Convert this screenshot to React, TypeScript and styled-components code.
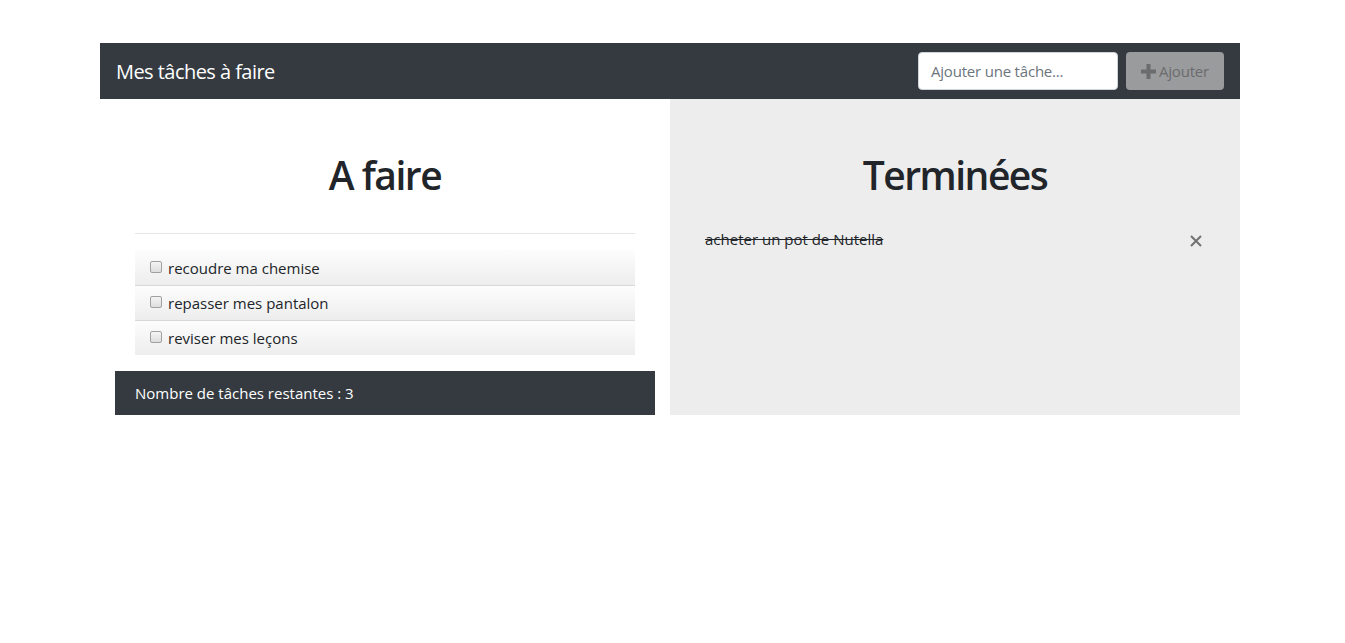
import React from "react";
import styled, { createGlobalStyle } from "styled-components";

const Global = createGlobalStyle`
  html, body { margin: 0; padding: 0; background: #fff; }
  body {
    font-family: "Open Sans", "Noto Sans", "Liberation Sans", sans-serif;
    color: #212529;
    font-size: 16px;
  }
  * { box-sizing: border-box; }
`;

const Page = styled.div`
  width: 1140px;
  margin: 43px 0 0 100px;
`;

const Navbar = styled.nav`
  height: 56px;
  background: #343a40;
  display: flex;
  align-items: center;
  justify-content: space-between;
  padding: 0 16px;
`;

const Brand = styled.span`
  color: #fff;
  font-size: 20px;
  letter-spacing: -0.55px;
`;

const Form = styled.div`
  display: flex;
  gap: 8px;
  align-items: center;
`;

const Input = styled.input`
  width: 200px;
  height: 38px;
  border: 1px solid #ced4da;
  border-radius: 4px;
  padding: 0 12px;
  font-family: inherit;
  font-size: 15px;
  letter-spacing: -0.2px;
  color: #495057;
  &::placeholder { color: #6c757d; }
`;

const Button = styled.button`
  height: 38px;
  width: 98px;
  border: none;
  border-radius: 4px;
  background: #9a9b9d;
  color: #6b6c6e;
  font-family: inherit;
  font-size: 15px;
  letter-spacing: -0.2px;
  display: flex;
  align-items: center;
  justify-content: center;
  gap: 3px;
  padding: 0;
`;

const Row = styled.div`
  display: grid;
  grid-template-columns: 1fr 1fr;
`;

const Column = styled.section<{ $grey?: boolean }>`
  background: ${(p) => (p.$grey ? "#ededed" : "#fff")};
  padding: 52px 15px 0;
  min-height: 316px;
`;

const Title = styled.h1`
  margin: 0;
  text-align: center;
  font-size: 39px;
  font-weight: 600;
  line-height: 48px;
  letter-spacing: -1.5px;
  color: #212529;
`;

const Inner = styled.div`
  padding: 0 20px;
`;

const Rule = styled.hr`
  margin: 34px 0 16px;
  border: 0;
  border-top: 1px solid #e6e6e6;
`;

const List = styled.ul`
  list-style: none;
  margin: 0 0 16px;
  padding: 0;
`;

const Item = styled.li`
  height: 35px;
  display: flex;
  align-items: center;
  padding: 0 15px;
  gap: 6px;
  font-size: 15px;
  background: linear-gradient(#fdfdfd, #ededed);
  & + & { border-top: 1px solid #d8d8d8; }
`;

const Check = styled.input`
  appearance: none;
  margin: 0 0 2px 0;
  width: 12px;
  height: 12px;
  border: 1px solid #a0a0a0;
  border-radius: 2px;
  background: linear-gradient(#f4f4f4, #dedede);
`;

const Footer = styled.div`
  height: 44px;
  background: #343a40;
  color: #fff;
  display: flex;
  align-items: center;
  padding: 0 20px;
  font-size: 15px;
`;

const DoneList = styled.ul`
  list-style: none;
  margin: 28px 0 0;
  padding: 0;
`;

const DoneItem = styled.li`
  display: flex;
  align-items: center;
  justify-content: space-between;
  height: 24px;
  font-size: 15px;
`;

const Struck = styled.span`
  text-decoration: line-through;
  color: #212529;
`;

const Close = styled.button`
  border: none;
  background: none;
  padding: 0;
  margin: 4px 3px 0 0;
  display: flex;
  cursor: pointer;
`;

const PlusIcon = () => (
  <svg width="15" height="15" viewBox="0 0 15 15">
    <rect x="5.5" y="0" width="4" height="15" fill="#6b6c6e" />
    <rect x="0" y="5.5" width="15" height="4" fill="#6b6c6e" />
  </svg>
);

const CloseIcon = () => (
  <svg width="12" height="12" viewBox="0 0 12 12">
    <path d="M1 1 L11 11 M11 1 L1 11" stroke="#727272" strokeWidth="2" />
  </svg>
);

const todos = ["recoudre ma chemise", "repasser mes pantalon", "reviser mes leçons"];

export default function App() {
  return (
    <>
      <Global />
      <Page>
        <Navbar>
          <Brand>Mes tâches à faire</Brand>
          <Form>
            <Input placeholder="Ajouter une tâche..." />
            <Button disabled>
              <PlusIcon />
              Ajouter
            </Button>
          </Form>
        </Navbar>
        <Row>
          <Column>
            <Title>A faire</Title>
            <Inner>
              <Rule />
              <List>
                {todos.map((t) => (
                  <Item key={t}>
                    <Check type="checkbox" />
                    {t}
                  </Item>
                ))}
              </List>
            </Inner>
            <Footer>Nombre de tâches restantes : 3</Footer>
          </Column>
          <Column $grey>
            <Title>Terminées</Title>
            <Inner>
              <DoneList>
                <DoneItem>
                  <Struck>acheter un pot de Nutella</Struck>
                  <Close aria-label="Supprimer">
                    <CloseIcon />
                  </Close>
                </DoneItem>
              </DoneList>
            </Inner>
          </Column>
        </Row>
      </Page>
    </>
  );
}
